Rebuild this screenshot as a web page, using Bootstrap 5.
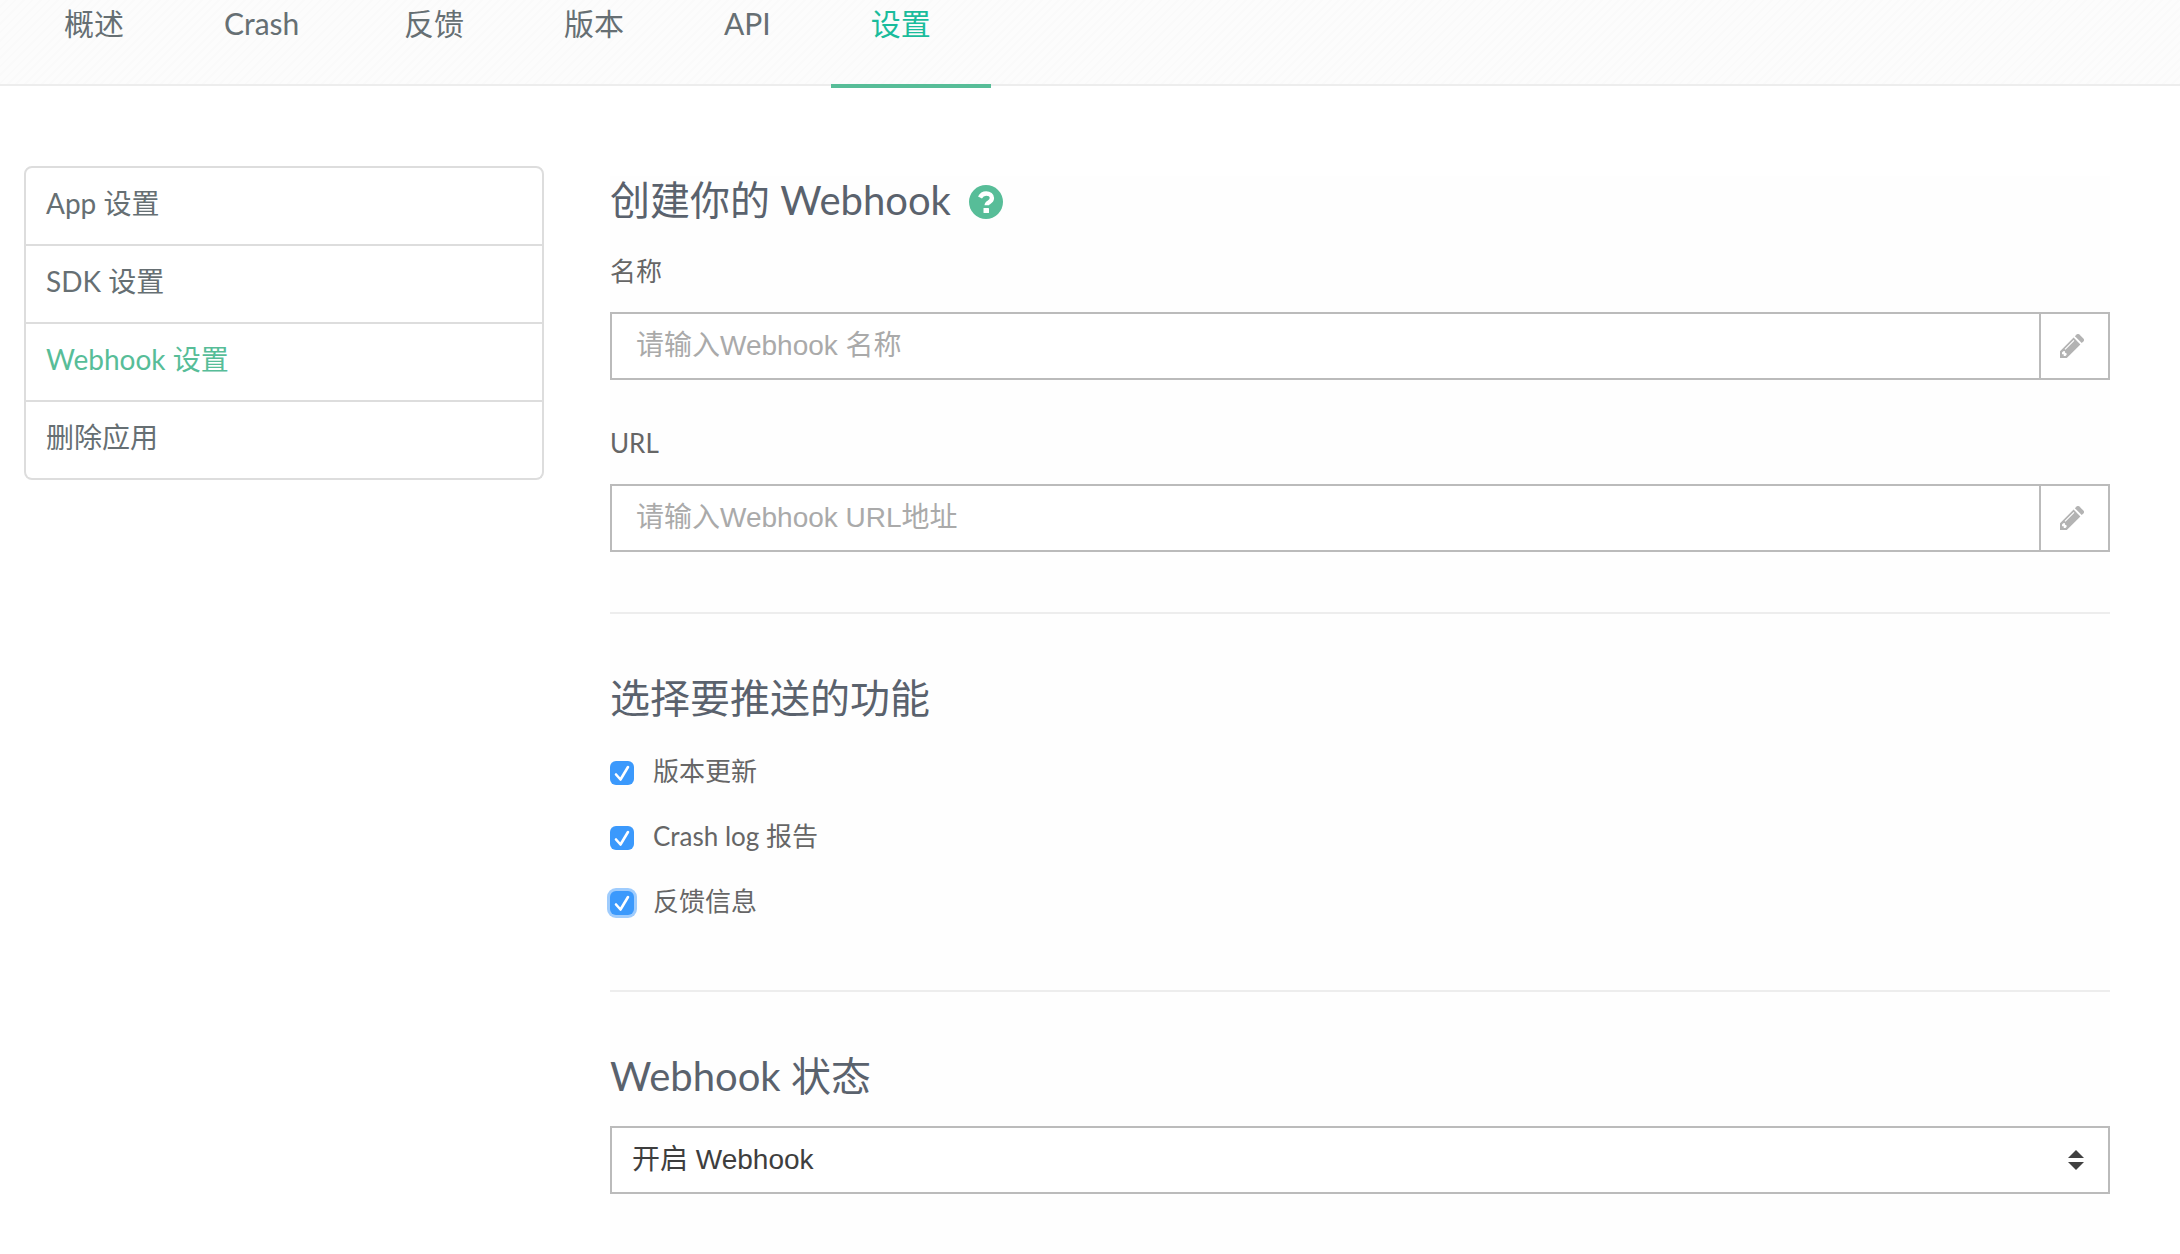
<!DOCTYPE html>
<html lang="zh-CN">
<head>
<meta charset="utf-8">
<meta name="viewport" content="width=device-width, initial-scale=1">
<title>Webhook 设置</title>
<link href="https://cdn.jsdelivr.net/npm/bootstrap@5.3.0/dist/css/bootstrap.min.css" rel="stylesheet">
<style>
  :root { --brand: #57bd98; --ink: #666f73; --line: #bbb; }
  body { font-family: Lato, "Noto Sans CJK SC", sans-serif; font-size: 26px; color: #666; background: #fff; }

  .app-tabs {
    padding-left: 24px;
    border-bottom: 2px solid #ededed;
    background: repeating-linear-gradient(135deg, #fcfcfc 0 4px, #fafafa 4px 6px);
  }
  .app-tabs .nav-link {
    height: 84px; padding: 2px 60px 0 40px; border: 0; border-radius: 0;
    font-size: 30px; line-height: 42px; color: var(--ink);
  }
  .app-tabs .tab-wide { min-width: 180px; }
  .app-tabs .nav-link.active { color: #1abc9c; background: none; box-shadow: 0 4px 0 var(--brand); }

  .page-body { padding: 80px 70px 0 24px; gap: 66px; }
  .side-menu { flex: 0 1 520px; --bs-list-group-border-color: #ddd; --bs-list-group-border-width: 2px; --bs-list-group-border-radius: 8px; }
  .side-menu .list-group-item { padding: 15px 20px 21px; font-size: 28px; line-height: 40px; color: var(--ink); background: #fff; }
  .side-menu .list-group-item.active { color: var(--brand); border-color: #ddd; margin-top: 0; border-top-width: 0; }

  .hook-form { margin-top: 10px; background: #fefefe; }
  .hook-form h2 { margin: 0; font-size: 40px; line-height: 48px; font-weight: 400; color: #5a626d; }
  .hook-form hr { margin: 60px 0; border-top: 2px solid #ededed; opacity: 1; }
  .help-link { color: var(--brand); margin-left: 18px; padding-top: 3px; line-height: 0; }
  .field { margin-top: 44px; }
  .field-first { margin-top: 28px; }
  .field label { display: block; margin-bottom: 22px; line-height: 38px; }
  .field .form-control, .field .input-group-text, .state-select {
    height: 68px; border: 2px solid var(--line); border-radius: 0; background-color: #fff;
    font-family: "Liberation Sans", "Noto Sans CJK SC", sans-serif; font-size: 28px; line-height: 40px;
  }
  .field .form-control { padding: 12px 24px; }
  .field .form-control::placeholder { color: #aaa; opacity: 1; }
  .field .input-group-text { width: 70px; padding: 0 0 0 20px; border-left: 0; margin-left: 0; color: #b3b3b3; }

  .checks { margin-top: 18px; margin-bottom: 55px; }
  .check-line { height: 65px; gap: 19px; }
  .check-line .form-check-input {
    width: 24px; height: 24px; margin: 0; border: 0; border-radius: 6px;
  }
  .check-line .form-check-input:checked {
    background: #3b99fc url("data:image/svg+xml,%3Csvg xmlns='http://www.w3.org/2000/svg' viewBox='0 0 24 24'%3E%3Cpath d='M6 13.5l4.5 5L18 6' fill='none' stroke='%23fff' stroke-width='2.6' stroke-linecap='round' stroke-linejoin='round'/%3E%3C/svg%3E") center / 24px no-repeat;
  }
  .check-line .ringed { box-shadow: 0 0 0 3px #9fccfd; }
  .check-line label { line-height: 38px; padding-bottom: 4px; }
  .hook-form .state-rule { margin-top: 0; }
  .state-select {
    margin-top: 26px; padding: 12px 60px 12px 20px; color: #3e3e3e;
    background-image: url("data:image/svg+xml,%3Csvg xmlns='http://www.w3.org/2000/svg' viewBox='0 0 16 20'%3E%3Cpath d='M8 0l8 8H0zM0 12h16l-8 8z' fill='%23404040'/%3E%3C/svg%3E");
    background-size: 16px 20px; background-position: right 24px center;
  }
</style>
</head>
<body class="min-vh-100 d-flex flex-column">
  <nav class="nav app-tabs">
    <a class="nav-link" href="#">概述</a>
    <a class="nav-link tab-wide" href="#">Crash</a>
    <a class="nav-link" href="#">反馈</a>
    <a class="nav-link" href="#">版本</a>
    <a class="nav-link" href="#">API</a>
    <a class="nav-link active" href="#" aria-current="page">设置</a>
  </nav>

  <div class="page-body d-flex flex-grow-1">
    <aside class="list-group side-menu align-self-start">
      <a class="list-group-item" href="#">App 设置</a>
      <a class="list-group-item" href="#">SDK 设置</a>
      <a class="list-group-item active" href="#">Webhook 设置</a>
      <a class="list-group-item" href="#">删除应用</a>
    </aside>

    <form class="hook-form flex-grow-1">
      <h2 class="d-flex align-items-center">创建你的 Webhook
        <a class="help-link" href="#" aria-label="帮助">
          <svg width="34" height="34" viewBox="0 0 34 34" aria-hidden="true">
            <circle cx="17" cy="17" r="17" fill="currentColor"/>
            <path d="M11 12.4C12.4 9.6 14.500 8.500 17.200 8.500c3.300 0 5.700 1.900 5.700 4.600 0 2.100-1.200 3.200-2.900 4.200-1.600.9-2.300 1.400-2.300 3" fill="none" stroke="#fff" stroke-width="4.400"/>
            <rect x="14.500" y="23" width="5.500" height="5" rx=".6" fill="#fff"/>
          </svg>
        </a>
      </h2>

      <div class="field field-first">
        <label for="hook-name">名称</label>
        <div class="input-group">
          <input type="text" class="form-control" id="hook-name" placeholder="请输入Webhook 名称">
          <span class="input-group-text">
            <svg width="24" height="24" viewBox="0 0 24 24" fill="currentColor" aria-hidden="true">
              <path fill-rule="evenodd" d="M0 17.200 13.600 3.600l6.800 6.800L6.800 24H0zM2 18.500v1.800h1.700V22h1.800l1.200-1.200-.4-1.800-1.300-.3-.2-1.600-1.600.2zM4.600 14.900l.8.800 9-9-.8-.8z"/>
              <path d="m14.900 2.300 1.700-1.700a2 2 0 0 1 2.800 0l4 4a2 2 0 0 1 0 2.800l-1.700 1.700z"/>
            </svg>
          </span>
        </div>
      </div>

      <div class="field">
        <label for="hook-url">URL</label>
        <div class="input-group">
          <input type="text" class="form-control" id="hook-url" placeholder="请输入Webhook URL地址">
          <span class="input-group-text">
            <svg width="24" height="24" viewBox="0 0 24 24" fill="currentColor" aria-hidden="true">
              <path fill-rule="evenodd" d="M0 17.200 13.600 3.600l6.800 6.800L6.800 24H0zM2 18.500v1.800h1.700V22h1.800l1.200-1.200-.4-1.800-1.300-.3-.2-1.600-1.600.2zM4.600 14.900l.8.800 9-9-.8-.8z"/>
              <path d="m14.900 2.300 1.700-1.700a2 2 0 0 1 2.800 0l4 4a2 2 0 0 1 0 2.800l-1.700 1.700z"/>
            </svg>
          </span>
        </div>
      </div>

      <hr>
      <h2>选择要推送的功能</h2>
      <div class="checks">
        <div class="check-line d-flex align-items-center">
          <input class="form-check-input" type="checkbox" id="push-version" checked>
          <label for="push-version">版本更新</label>
        </div>
        <div class="check-line d-flex align-items-center">
          <input class="form-check-input" type="checkbox" id="push-crash" checked>
          <label for="push-crash">Crash log 报告</label>
        </div>
        <div class="check-line d-flex align-items-center">
          <input class="form-check-input ringed" type="checkbox" id="push-feedback" checked>
          <label for="push-feedback">反馈信息</label>
        </div>
      </div>

      <hr class="state-rule">
      <h2><label for="hook-state">Webhook 状态</label></h2>
      <select class="form-select state-select" id="hook-state">
        <option selected>开启 Webhook</option>
        <option>关闭 Webhook</option>
      </select>
    </form>
  </div>
<script src="https://cdn.jsdelivr.net/npm/bootstrap@5.3.0/dist/js/bootstrap.bundle.min.js"></script>
</body>
</html>
